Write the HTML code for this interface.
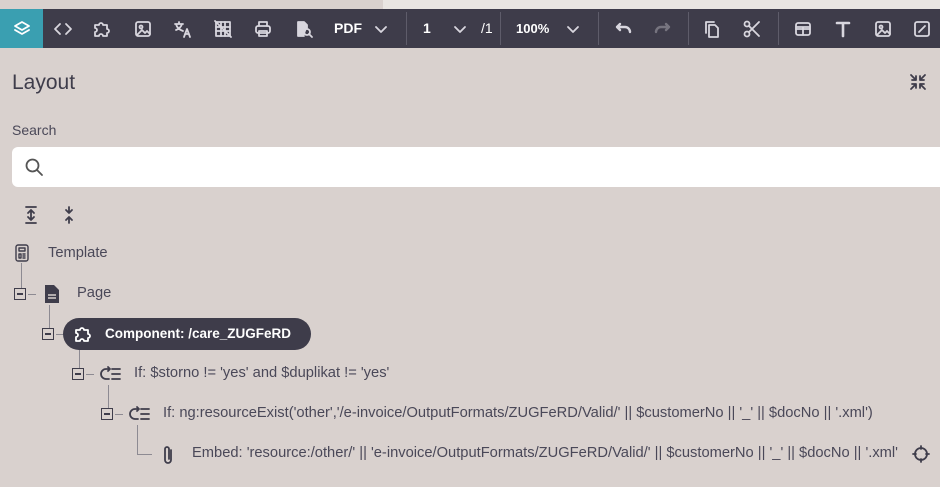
<!DOCTYPE html>
<html><head><meta charset="utf-8"><style>
*{margin:0;padding:0;box-sizing:border-box}
body{width:940px;height:487px;overflow:hidden;background:#d9d1ce;font-family:"Liberation Sans",sans-serif;position:relative;color:#3f3d4b}
.a{position:absolute}
.tb{left:0;top:9px;width:940px;height:39px;background:#3e3c4a}
.ic{position:absolute;top:9px;width:40px;height:39px;display:flex;align-items:center;justify-content:center}
.ic svg{width:20px;height:20px;fill:none;stroke:#d8d6de;stroke-width:1.8;stroke-linecap:round;stroke-linejoin:round}
.sep{position:absolute;top:12px;width:1px;height:33px;background:#5e5c6a}
.tt{position:absolute;top:9px;height:39px;line-height:39px;color:#fff;font-weight:bold;font-size:14px}
.tx{position:absolute;font-size:14.7px;color:#4a4858;white-space:nowrap}
.bx{position:absolute;width:12px;height:12px;border:1.5px solid #3f3d4b;background:#d9d1ce}
.bx:after{content:"";position:absolute;left:2px;right:2px;top:4px;height:1.5px;background:#3f3d4b}
.ln{position:absolute;background:#8d8a92}
.ti svg{position:absolute;fill:none;stroke:#3f3d4b;stroke-width:1.8;stroke-linecap:round;stroke-linejoin:round}
</style></head><body>
<div class="a" style="left:383px;top:0;width:557px;height:9px;background:#e9e5e2"></div>
<div class="a tb"></div>
<div class="a" style="left:0;top:9px;width:43px;height:39px;background:#3a9fb1"></div>
<div class="ic" style="left:2px"><svg viewBox="0 0 20 20" style="stroke:#fff"><path d="M10 3l7 4-7 4-7-4z"/><path d="M3 11l7 4 7-4"/></svg></div>
<div class="ic" style="left:43px"><svg viewBox="0 0 20 20"><path d="M7 5l-5 5 5 5M13 5l5 5-5 5"/></svg></div>
<div class="ic" style="left:82px"><svg viewBox="0 0 20 20"><path d="M3 6h4a2 2 0 1 1 4 0h4v4a2 2 0 1 1 0 4v3h-4a2 2 0 1 0-4 0H3v-4a2 2 0 1 0 0-4z"/></svg></div>
<div class="ic" style="left:123px"><svg viewBox="0 0 20 20"><rect x="3" y="3" width="14" height="14" rx="2"/><circle cx="8" cy="8" r="1.5"/><path d="M4 16l5-5 3 3 2-2 3 3"/></svg></div>
<div class="ic" style="left:163px"><svg viewBox="0 0 20 20"><path d="M2 5h8M6 3v2M3 5c1 4 4 6 7 7M9 5c-1 3-3 5-6 6M11 18l3-8 3 8M12 15h4"/></svg></div>
<div class="ic" style="left:203px"><svg viewBox="0 0 20 20"><rect x="3" y="3" width="14" height="14"/><path d="M3 8h14M3 12h14M8 3v14M12 3v14M2 2l16 16"/></svg></div>
<div class="ic" style="left:243px"><svg viewBox="0 0 20 20"><rect x="3" y="7" width="14" height="7" rx="2"/><path d="M6 7V3h8v4M6 12h8v5H6z"/></svg></div>
<div class="ic" style="left:284px"><svg viewBox="0 0 20 20"><path d="M13 9V6l-3-3H4v14h6" style="fill:#d8d6de"/><circle cx="13" cy="13" r="3"/><path d="M15 15l3 3"/></svg></div>
<div class="tt" style="left:334px">PDF</div>
<div class="ic" style="left:361px"><svg viewBox="0 0 20 20"><path d="M5 8l5 5 5-5"/></svg></div>
<div class="sep" style="left:406px"></div>
<div class="tt" style="left:423px">1</div>
<div class="ic" style="left:440px"><svg viewBox="0 0 20 20"><path d="M5 8l5 5 5-5"/></svg></div>
<div class="tt" style="left:481px;font-weight:normal">/1</div>
<div class="sep" style="left:500px"></div>
<div class="tt" style="left:516px;font-size:13px">100%</div>
<div class="ic" style="left:553px"><svg viewBox="0 0 20 20"><path d="M5 8l5 5 5-5"/></svg></div>
<div class="sep" style="left:598px"></div>
<div class="ic" style="left:603px"><svg viewBox="0 0 20 20" style="stroke-width:2.4"><path d="M4 8h8a5 5 0 0 1 5 5M4 8l3-3M4 8l3 3"/></svg></div>
<div class="ic" style="left:643px"><svg viewBox="0 0 20 20" style="stroke:#76747f;stroke-width:2.4"><path d="M16 8H8a5 5 0 0 0-5 5M16 8l-3-3M16 8l-3 3"/></svg></div>
<div class="sep" style="left:688px"></div>
<div class="ic" style="left:692px"><svg viewBox="0 0 20 20"><path d="M4 14V3h8"/><path d="M7 6h6l3 3v9H7z"/></svg></div>
<div class="ic" style="left:732px"><svg viewBox="0 0 20 20"><circle cx="5" cy="5" r="2.5"/><circle cx="5" cy="15" r="2.5"/><path d="M7 7l10 10M7 13L17 3"/></svg></div>
<div class="sep" style="left:778px"></div>
<div class="ic" style="left:783px"><svg viewBox="0 0 20 20"><rect x="3" y="4" width="14" height="12" rx="2"/><path d="M3 10h14M10 8v8M3 8h14"/></svg></div>
<div class="ic" style="left:823px"><svg viewBox="0 0 20 20" style="stroke-width:2.6"><path d="M4 4h12M10 4v13"/></svg></div>
<div class="ic" style="left:863px"><svg viewBox="0 0 20 20"><rect x="3" y="3" width="14" height="14" rx="2"/><circle cx="8" cy="8" r="1.5"/><path d="M4 16l5-5 3 3 2-2 3 3"/></svg></div>
<div class="ic" style="left:902px"><svg viewBox="0 0 20 20"><rect x="3" y="3" width="14" height="14" rx="2"/><path d="M7 13l6-6"/></svg></div>

<div class="tx" style="left:12px;top:71px;font-size:21px;color:#3f3d4b">Layout</div>
<div class="ti"><svg style="left:909px;top:73px" width="18" height="18" viewBox="0 0 18 18"><path d="M2 2l5 5M7 3v4H3M16 2l-5 5M11 3v4h4M2 16l5-5M7 15v-4H3M16 16l-5-5M11 15v-4h4"/></svg></div>
<div class="tx" style="left:12px;top:122px;font-size:14px">Search</div>
<div class="a" style="left:12px;top:147px;width:940px;height:40px;background:#fff;border-radius:6px"></div>
<div class="ti"><svg style="left:24px;top:157px" width="20" height="20" viewBox="0 0 20 20" ><circle cx="8.5" cy="8.5" r="6" style="stroke:#555"/><path d="M13 13l5 5" style="stroke:#555"/></svg></div>
<div class="ti"><svg style="left:24px;top:205px" width="14" height="20" viewBox="0 0 14 20"><path d="M2 2h10M7 5v10M4 8l3-3 3 3M4 12l3 3 3-3M2 18h10"/></svg>
<svg style="left:62px;top:205px" width="14" height="20" viewBox="0 0 14 20"><path d="M7 2v6M4 5l3 3 3-3M7 12v6M4 15l3-3 3 3"/></svg></div>

<div class="ln" style="left:21px;top:263px;width:1px;height:26px"></div>
<div class="ln" style="left:49px;top:305px;width:1px;height:24px"></div>
<div class="ln" style="left:28px;top:294px;width:8px;height:1px"></div>
<div class="ln" style="left:56px;top:334px;width:8px;height:1px"></div>
<div class="ln" style="left:79px;top:350px;width:1px;height:19px"></div>
<div class="ln" style="left:86px;top:374px;width:8px;height:1px"></div>
<div class="ln" style="left:108px;top:385px;width:1px;height:24px"></div>
<div class="ln" style="left:115px;top:414px;width:8px;height:1px"></div>
<div class="ln" style="left:137px;top:425px;width:1px;height:29px"></div>
<div class="ln" style="left:137px;top:454px;width:15px;height:1px"></div>

<div class="ti"><svg style="left:14px;top:243px;stroke-width:1.4" width="16" height="20" viewBox="0 0 16 20"><rect x="2" y="2" width="12" height="16" rx="2"/><path d="M5 5h6v3H5zM5 11h2v4H5zM9 11h2M9 13h2M9 15h2"/></svg></div>
<div class="tx" style="left:48px;top:245px">Template</div>
<div class="bx" style="left:14px;top:288px"></div>
<svg class="a" style="left:43px;top:283px" width="18" height="22" viewBox="0 0 18 22"><path d="M2 2h9l5 5v13H2z" fill="#3f3d4b"/><path d="M5 12h8M5 15h8" stroke="#d9d1ce" stroke-width="1.6"/></svg>
<div class="tx" style="left:77px;top:285px">Page</div>
<div class="bx" style="left:42px;top:328px"></div>
<div class="a" style="left:63px;top:318px;width:248px;height:32px;border-radius:16px;background:#3e3c4a"></div>
<div class="ti"><svg style="left:73px;top:324px;stroke:#fff" width="20" height="20" viewBox="0 0 20 20"><path d="M3 6h4a2 2 0 1 1 4 0h4v4a2 2 0 1 1 0 4v3h-4a2 2 0 1 0-4 0H3v-4a2 2 0 1 0 0-4z"/></svg></div>
<div class="tx" style="left:105px;top:326px;color:#fff;font-weight:bold;font-size:13.5px">Component: /care_ZUGFeRD</div>
<div class="bx" style="left:72px;top:368px"></div>
<div class="ti"><svg style="left:100px;top:364px" width="22" height="20" viewBox="0 0 22 20"><path d="M9 5H6a4 4 0 0 0 0 10h3M8 3l2 2-2 2M12 5h8M12 10h8M12 15h8"/></svg></div>
<div class="tx" style="left:134px;top:365px">If: $storno != 'yes' and $duplikat != 'yes'</div>
<div class="bx" style="left:101px;top:408px"></div>
<div class="ti"><svg style="left:129px;top:404px" width="22" height="20" viewBox="0 0 22 20"><path d="M9 5H6a4 4 0 0 0 0 10h3M8 3l2 2-2 2M12 5h8M12 10h8M12 15h8"/></svg></div>
<div class="tx" style="left:163px;top:405px">If: ng:resourceExist('other','/e-invoice/OutputFormats/ZUGFeRD/Valid/' || $customerNo || '_' || $docNo || '.xml')</div>
<div class="ti"><svg style="left:160px;top:444px" width="16" height="22" viewBox="0 0 16 22"><path d="M11 6v10a3 3 0 0 1-6 0V5a2 2 0 0 1 4 0v10"/></svg></div>
<div class="tx" style="left:192px;top:445px">Embed: 'resource:/other/' || 'e-invoice/OutputFormats/ZUGFeRD/Valid/' || $customerNo || '_' || $docNo || '.xml'</div>
<div class="ti"><svg style="left:911px;top:444px" width="20" height="20" viewBox="0 0 20 20" style="stroke-width:2.2"><circle cx="10" cy="10" r="6"/><path d="M10 2v3M10 15v3M2 10h3M15 10h3"/></svg></div>
</body></html>
